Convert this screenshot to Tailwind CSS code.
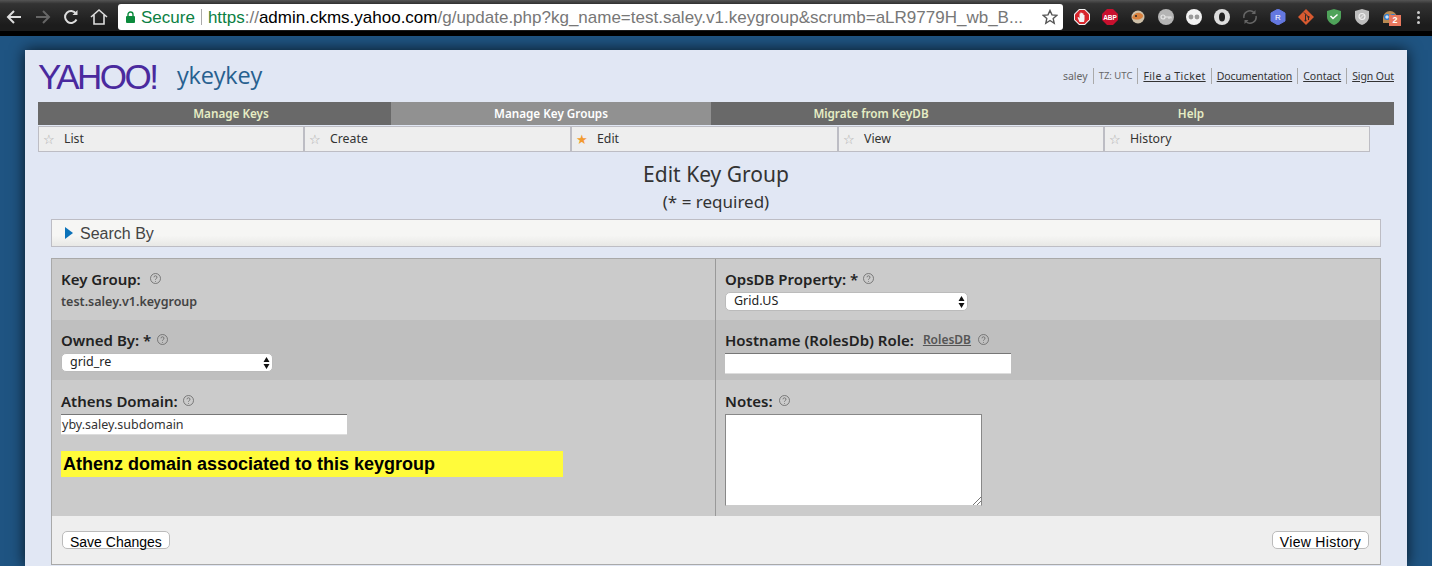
<!DOCTYPE html>
<html>
<head>
	<meta charset="utf-8">
	<title>Edit Key Group</title>
	<script src="https://cdn.jsdelivr.net/npm/@tailwindcss/browser@4"></script>
</head>
<body class="w-[1432px] h-[566px] overflow-hidden bg-[#1f5482] font-['Noto_Sans',sans-serif]">
	<!-- browser toolbar -->
	<div class="h-[36px] bg-[linear-gradient(#555,#333_12%,#1c1c1c_80%)] border-b-[5px] border-black flex items-start pt-[4px] pl-[6px] relative">
		<div class="w-[112px] h-[26px] flex items-center text-white shrink-0">
			<svg class="w-[16px] h-[16px]" viewBox="0 0 16 16" fill="none" stroke="#ddd" stroke-width="2"><path d="M15 8H2M8 2L2 8l6 6"/></svg>
			<svg class="w-[16px] h-[16px] ml-[13px]" viewBox="0 0 16 16" fill="none" stroke="#666" stroke-width="2"><path d="M1 8h13M8 2l6 6-6 6"/></svg>
			<svg class="w-[16px] h-[16px] ml-[12px]" viewBox="0 0 16 16" fill="none" stroke="#ddd" stroke-width="2"><path d="M13.5 10.5A6 6 0 1 1 13 4.5"/><path d="M14.5 1v5h-5z" fill="#ddd" stroke="none"/></svg>
			<svg class="w-[18px] h-[18px] ml-[11px]" viewBox="0 0 18 18" fill="none" stroke="#ddd" stroke-width="1.6"><path d="M1 9l8-7 8 7M4 7v9h10V7"/></svg>
		</div>
		<div class="w-[945px] h-[26px] bg-white rounded-[3px] flex items-center pl-[8px] shrink-0 font-['Liberation_Sans',sans-serif] text-[17px] leading-none whitespace-nowrap">
			<svg class="w-[9px] h-[12px] mr-[6px]" viewBox="0 0 9 12"><rect y="5" width="9" height="7" rx="1" fill="#0b8a3c"/><path d="M2 5V3.5a2.5 2.5 0 0 1 5 0V5" fill="none" stroke="#0b8a3c" stroke-width="1.4"/></svg>
			<span class="text-[#0b8043]">Secure</span>
			<span class="w-px h-[16px] bg-[#aaa] mx-[6px]"></span>
			<span class="text-[#0b8043]">https</span><span class="text-[#777]">://</span><span class="text-black">admin.ckms.yahoo.com</span><span class="text-[#777]">/g/update.php?kg_name=test.saley.v1.keygroup&amp;scrumb=aLR9779H_wb_B...</span>
			<svg class="w-[16px] h-[16px] ml-auto mr-[5px]" viewBox="0 0 16 16" fill="none" stroke="#555" stroke-width="1.4"><path d="M8 1.5l2 4.4 4.7.5-3.5 3.2 1 4.7L8 11.5l-4.2 2.8 1-4.7L1.3 6.4 6 5.9z"/></svg>
		</div>
		<!-- extension icons -->
		<div class="flex items-center h-[26px] ml-[11px] gap-[12px] shrink-0">
			<svg class="w-[16px] h-[16px]" viewBox="0 0 16 16"><path d="M5 0h6l5 5v6l-5 5H5l-5-5V5z" fill="#f2f2f2"/><path d="M5.500 1h5l4.500 4.500v5L10.500 15h-5L1 10.500v-5z" fill="#d8262c"/><path d="M5.500 13l-2-4.500 1-.5 1 1.500V4.500h1V3.500h1v.5h1v.5h1V6h1v4.500L10 13z" fill="#f4f4f4"/></svg>
			<svg class="w-[16px] h-[16px]" viewBox="0 0 16 16"><path d="M5 0h6l5 5v6l-5 5H5l-5-5V5z" fill="#c8102e"/><text x="8" y="10.5" font-size="6.5" font-weight="700" text-anchor="middle" fill="#fff" font-family="Liberation Sans">ABP</text></svg>
			<svg class="w-[16px] h-[16px]" viewBox="0 0 16 16"><circle cx="8" cy="8" r="6.500" fill="#cdbfa8"/><path d="M2 9c1-4 5-6 8-5 3 1 4 3 2 5-3 2-7 2-10 0z" fill="#d9803c"/><circle cx="6" cy="7" r="1" fill="#222"/></svg>
			<svg class="w-[16px] h-[16px]" viewBox="0 0 16 16"><circle cx="8" cy="8" r="8" fill="#b4b4b4"/><circle cx="5" cy="8" r="2" fill="none" stroke="#e6e6e6" stroke-width="1.200"/><path d="M7 8h6.500M11 8v2M13 8v1.500" fill="none" stroke="#e6e6e6" stroke-width="1.100"/></svg>
			<svg class="w-[16px] h-[16px]" viewBox="0 0 16 16"><circle cx="8" cy="8" r="8" fill="#f2f2f2"/><circle cx="5" cy="8" r="2.400" fill="#999"/><circle cx="11" cy="8" r="2.400" fill="#999"/></svg>
			<svg class="w-[16px] h-[16px]" viewBox="0 0 16 16"><circle cx="8" cy="8" r="8" fill="#ddd"/><ellipse cx="8" cy="8" rx="3" ry="4.500" fill="#222"/></svg>
			<svg class="w-[16px] h-[16px]" viewBox="0 0 16 16" fill="none" stroke="#666" stroke-width="1.500"><path d="M2 9a6 6 0 0 1 10-5.500M14 7a6 6 0 0 1-10 5.500"/><path d="M13.500 1v4h-4zM2.500 15v-4h4z" fill="#666" stroke="none"/></svg>
			<svg class="w-[16px] h-[16px]" viewBox="0 0 16 16"><path d="M8 0l7 4v8l-7 4-7-4V4z" fill="#6478e0" stroke="#6478e0" stroke-linejoin="round"/><text x="8" y="11" font-size="8" text-anchor="middle" fill="#fff" font-family="Liberation Sans">R</text></svg>
			<svg class="w-[16px] h-[16px]" viewBox="0 0 16 16"><path d="M8 0l8 8-8 8-8-8z" fill="#d85a30"/><path d="M6 3.500l4.500 4.500v3M7.500 5.500v6" stroke="#2a2a2a" stroke-width="1" fill="none"/><circle cx="10.500" cy="8" r="1.100" fill="#2a2a2a"/><circle cx="7.500" cy="11.500" r="1.100" fill="#2a2a2a"/></svg>
			<svg class="w-[16px] h-[16px]" viewBox="0 0 16 16"><path d="M1 2l7-2 7 2v6c0 4-4 7-7 8-3-1-7-4-7-8z" fill="#4fa35a"/><path d="M4.500 7l2.500 2.500 4.500-4" stroke="#fff" stroke-width="1.500" fill="none"/></svg>
			<svg class="w-[16px] h-[16px]" viewBox="0 0 16 16"><path d="M1 2l7-2 7 2v6c0 4-4 7-7 8-3-1-7-4-7-8z" fill="#bdbdbd"/><circle cx="8" cy="7.500" r="3" fill="none" stroke="#eee" stroke-width="1.200"/><path d="M6 9.500l4-4" stroke="#eee" stroke-width="1"/></svg>
			<div class="relative w-[16px] h-[16px]">
				<svg class="w-[16px] h-[16px]" viewBox="0 0 16 16"><path d="M1 9a7 7 0 0 1 14 0v5H1z" fill="#b98a52"/><circle cx="5" cy="8" r="2.400" fill="#cfe4f7" stroke="#2c7bd0" stroke-width="1.300"/><circle cx="11" cy="8" r="2.400" fill="#cfe4f7" stroke="#2c7bd0" stroke-width="1.300"/></svg>
				<span class="absolute left-[7px] top-[6px] w-[12px] h-[11px] bg-[#e9785e] text-white text-[9px] leading-[11px] text-center font-bold font-['Liberation_Sans',sans-serif]">2</span>
			</div>
			<div class="flex flex-col gap-[2px] ml-[7px]">
				<span class="w-[3px] h-[3px] bg-[#ccc] rounded-full"></span>
				<span class="w-[3px] h-[3px] bg-[#ccc] rounded-full"></span>
				<span class="w-[3px] h-[3px] bg-[#ccc] rounded-full"></span>
			</div>
		</div>
	</div>

	<!-- page card -->
	<div class="mt-[14px] ml-[25px] w-[1382px] h-[516px] bg-[#e1e7f4] px-[13px] shadow-[0_0_14px_rgba(0,0,0,0.75)]">
		<!-- header -->
		<div class="h-[52px] flex items-start justify-between">
			<div class="flex items-center h-[50px] pt-[2px]">
				<span class="font-['Liberation_Sans',sans-serif] text-[#4a2a9e] text-[35px] leading-none tracking-[-2.5px] w-[139px]">YAHOO!</span>
				<span class="text-[#27608f] text-[23.500px] font-medium leading-none font-['Open_Sans',sans-serif] tracking-[-0.2px]">ykeykey</span>
			</div>
			<div class="flex items-center text-[10.500px] leading-[16px] mt-[18px] text-[#333]">
				<span class="text-[#666] pr-[5px]">saley</span>
				<span class="text-[#666] text-[9.500px] border-l border-[#aaa] px-[5px]">TZ: UTC</span>
				<a class="underline border-l border-[#aaa] px-[5px] tracking-[0.4px]">File a Ticket</a>
				<a class="underline border-l border-[#aaa] px-[5px] tracking-[-0.1px]">Documentation</a>
				<a class="underline border-l border-[#aaa] px-[5px]">Contact</a>
				<a class="underline border-l border-[#aaa] pl-[5px] tracking-[-0.1px]">Sign Out</a>
			</div>
		</div>
		<!-- main tabs -->
		<div class="h-[23px] bg-[#696969] pl-[33px] flex text-[11.700px] font-semibold leading-[23px] text-center text-[#e6edc4]">
			<div class="w-[320px]">Manage Keys</div>
			<div class="w-[320px] bg-[#919191] text-white">Manage Key Groups</div>
			<div class="w-[320px]">Migrate from KeyDB</div>
			<div class="w-[320px]">Help</div>
		</div>
		<!-- sub tabs -->
		<div class="mt-[1px] w-[1332px] h-[26px] grid grid-cols-[266px_267px_267px_266px_1fr] bg-[#eee] border border-[#bdbdc4] text-[12.300px] text-[#333]">
			<div class="flex items-center pl-[4px] gap-[9px] border-r-2 border-[#bdbdc4]"><span class="text-[#aaa] text-[13px] w-[12px] leading-none">☆</span>List</div>
			<div class="flex items-center pl-[4px] gap-[9px] border-r-2 border-[#bdbdc4]"><span class="text-[#aaa] text-[13px] w-[12px] leading-none">☆</span>Create</div>
			<div class="flex items-center pl-[4px] gap-[9px] border-r-2 border-[#bdbdc4]"><span class="text-[#f29a2e] text-[13px] w-[12px] leading-none">★</span>Edit</div>
			<div class="flex items-center pl-[4px] gap-[9px] border-r-2 border-[#bdbdc4]"><span class="text-[#aaa] text-[13px] w-[12px] leading-none">☆</span>View</div>
			<div class="flex items-center pl-[4px] gap-[9px]"><span class="text-[#aaa] text-[13px] w-[12px] leading-none">☆</span>History</div>
		</div>
		<!-- title -->
		<div class="mt-[7px] text-center text-[#333] text-[21px] leading-[30px]">Edit Key Group</div>
		<div class="text-center text-[#333] text-[17px] leading-[26px]">(* = required)</div>
		<!-- search by -->
		<div class="mt-[4px] mx-[13px] h-[28px] pt-[2px] bg-[linear-gradient(#f6f6f4_60%,#e8e8e6)] border border-[#bdbdc4] flex items-center pl-[13px] gap-[7px] font-['Liberation_Sans',sans-serif] text-[16px] text-[#444]">
			<svg class="w-[8px] h-[12px] -mt-[2px]" viewBox="0 0 8 12"><path d="M0 0l8 6-8 6z" fill="#0b72b9"/></svg>Search By
		</div>
		<!-- form -->
		<div class="mt-[11px] mx-[13px] border border-[#a9a9a9] text-[#222]">
			<div class="grid grid-cols-[664px_1fr] h-[61px] bg-[#cbcbcb]">
				<div class="pl-[9px] pt-[10px] border-r border-[#999]">
					<div class="flex items-center h-[20px] text-[15px] font-semibold">Key Group:<svg class="w-[11px] h-[11px] ml-[9px] -mt-[2px]" viewBox="0 0 11 11" fill="none" stroke="#666" stroke-width="0.8"><circle cx="5.500" cy="5.500" r="5"/><path d="M4 4.300a1.500 1.500 0 1 1 2 1.400c-.4.200-.5.500-.5 1M5.500 8v.8"/></svg></div>
					<div class="mt-[3px] text-[12.500px] font-semibold text-[#444] leading-[20px]">test.saley.v1.keygroup</div>
				</div>
				<div class="pl-[9px] pt-[10px]">
					<div class="flex items-center h-[20px] text-[15px] font-semibold">OpsDB Property: *<svg class="w-[11px] h-[11px] ml-[5px] -mt-[2px]" viewBox="0 0 11 11" fill="none" stroke="#666" stroke-width="0.8"><circle cx="5.500" cy="5.500" r="5"/><path d="M4 4.300a1.500 1.500 0 1 1 2 1.400c-.4.200-.5.500-.5 1M5.500 8v.8"/></svg></div>
					<div class="mt-[3px] w-[243px] h-[19px] bg-white rounded-[5px] border border-[#bbb] flex items-center justify-between pl-[8px] pr-[2px] text-[12.500px]">Grid.US<svg class="w-[7px] h-[12px]" viewBox="0 0 7 12"><path d="M3.500 0l3 5h-6zM3.500 12l3-5h-6z" fill="#111"/></svg></div>
				</div>
			</div>
			<div class="grid grid-cols-[664px_1fr] h-[60px] bg-[#bfbfbf]">
				<div class="pl-[9px] pt-[10px] border-r border-[#999]">
					<div class="flex items-center h-[20px] text-[15px] font-semibold">Owned By: *<svg class="w-[11px] h-[11px] ml-[6px] -mt-[2px]" viewBox="0 0 11 11" fill="none" stroke="#666" stroke-width="0.8"><circle cx="5.500" cy="5.500" r="5"/><path d="M4 4.300a1.500 1.500 0 1 1 2 1.400c-.4.200-.5.500-.5 1M5.500 8v.8"/></svg></div>
					<div class="mt-[3px] w-[212px] h-[19px] bg-white rounded-[5px] border border-[#bbb] flex items-center justify-between pl-[8px] pr-[2px] text-[12.500px]">grid_re<svg class="w-[7px] h-[12px]" viewBox="0 0 7 12"><path d="M3.500 0l3 5h-6zM3.500 12l3-5h-6z" fill="#111"/></svg></div>
				</div>
				<div class="pl-[9px] pt-[10px]">
					<div class="flex items-center h-[20px] text-[15px] font-semibold">Hostname (RolesDb) Role:<a class="ml-[9px] text-[12px] underline text-[#555]">RolesDB</a><svg class="w-[11px] h-[11px] ml-[7px] -mt-[2px]" viewBox="0 0 11 11" fill="none" stroke="#666" stroke-width="0.8"><circle cx="5.500" cy="5.500" r="5"/><path d="M4 4.300a1.500 1.500 0 1 1 2 1.400c-.4.200-.5.500-.5 1M5.500 8v.8"/></svg></div>
					<div class="mt-[3px] w-[286px] h-[21px] bg-white border-t border-[#777] border-b border-b-[#ddd]"></div>
				</div>
			</div>
			<div class="grid grid-cols-[664px_1fr] h-[136px] bg-[#cbcbcb]">
				<div class="pl-[9px] pt-[11px] border-r border-[#999]">
					<div class="flex items-center h-[20px] text-[15px] font-semibold">Athens Domain:<svg class="w-[11px] h-[11px] ml-[5px] -mt-[2px]" viewBox="0 0 11 11" fill="none" stroke="#666" stroke-width="0.8"><circle cx="5.500" cy="5.500" r="5"/><path d="M4 4.300a1.500 1.500 0 1 1 2 1.400c-.4.200-.5.500-.5 1M5.500 8v.8"/></svg></div>
					<div class="mt-[3px] w-[286px] h-[21px] bg-white border-t border-[#777] border-b border-b-[#ddd] pl-[1px] text-[12.500px] leading-[19px] text-[#333]">yby.saley.subdomain</div>
					<div class="mt-[16px] w-[502px] h-[26px] bg-[#fffb3a] pl-[2px] font-['Liberation_Sans',sans-serif] font-bold text-[18px] leading-[26px] text-black">Athenz domain associated to this keygroup</div>
				</div>
				<div class="pl-[9px] pt-[11px]">
					<div class="flex items-center h-[20px] text-[15px] font-semibold">Notes:<svg class="w-[11px] h-[11px] ml-[6px] -mt-[2px]" viewBox="0 0 11 11" fill="none" stroke="#666" stroke-width="0.8"><circle cx="5.500" cy="5.500" r="5"/><path d="M4 4.300a1.500 1.500 0 1 1 2 1.400c-.4.200-.5.500-.5 1M5.500 8v.8"/></svg></div>
					<div class="mt-[3px] w-[257px] h-[92px] bg-white border border-[#888] border-b-[#ccc] relative">
						<svg class="absolute right-0 bottom-0 w-[8px] h-[8px]" viewBox="0 0 8 8" stroke="#777" stroke-width="1"><path d="M8 0L0 8M8 4L4 8"/></svg>
					</div>
				</div>
			</div>
			<div class="h-[48px] bg-[#eee] flex justify-between items-start pt-[15px] pl-[10px] pr-[11px] font-['Liberation_Sans',sans-serif] text-[14px] text-black">
				<button class="h-[18px] px-[7px] bg-white rounded-[5px] border border-[#bbb] leading-[20px]">Save Changes</button>
				<button class="h-[18px] px-[7px] bg-white rounded-[5px] border border-[#bbb] leading-[20px] tracking-[0.3px]">View History</button>
			</div>
		</div>
	</div>
</body>
</html>
